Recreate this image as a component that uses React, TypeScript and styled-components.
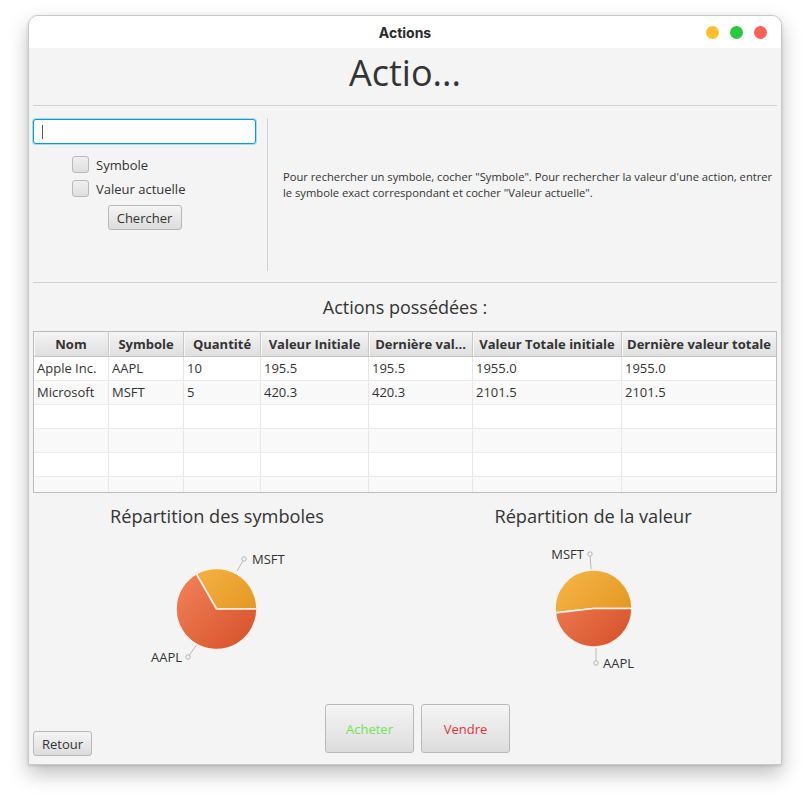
import React from "react";
import styled, { createGlobalStyle } from "styled-components";

const Global = createGlobalStyle`
  html, body { margin: 0; padding: 0; background: #ffffff; }
  body { font-family: "Open Sans", "Noto Sans", sans-serif; color: #333333; }
  * { box-sizing: border-box; }
`;

const Page = styled.div`
  width: 810px;
  height: 805px;
  padding: 15px 0 0 28px;
`;

const Window = styled.div`
  width: 754px;
  height: 750px;
  display: flex;
  flex-direction: column;
  border: 1px solid #c9c9c9;
  border-radius: 10px 10px 0 0;
  background: #f4f4f4;
  box-shadow: 0 9px 20px rgba(0, 0, 0, 0.25), 0 1px 3px rgba(0, 0, 0, 0.14);
  overflow: hidden;
`;

const TitleBar = styled.div`
  flex: none;
  height: 32px;
  background: #ffffff;
  display: grid;
  grid-template-columns: 1fr auto 1fr;
  align-items: center;
  padding: 0 14px;
`;

const WindowTitle = styled.div`
  grid-column: 2;
  font-family: Inter, "Liberation Sans", sans-serif;
  font-weight: 700;
  font-size: 14px;
  color: #2b2b2b;
`;

const Lights = styled.div`
  grid-column: 3;
  justify-self: end;
  display: flex;
  gap: 11px;
`;

const Light = styled.span<{ $c: string }>`
  width: 13px;
  height: 13px;
  border-radius: 50%;
  background: ${(p) => p.$c};
`;

const Content = styled.div`
  flex: 1;
  display: flex;
  flex-direction: column;
  padding: 0 4px 8px 4px;
`;

const Heading = styled.h1`
  margin: 0;
  height: 50px;
  line-height: 50px;
  text-align: center;
  font-weight: 400;
  font-size: 36px;
  color: #333;
`;

const HSep = styled.div<{ $mt?: number }>`
  height: 1px;
  background: #d2d2d2;
  margin-top: ${(p) => p.$mt ?? 0}px;
`;

const SearchSection = styled.div`
  height: 176px;
  display: flex;
`;

const LeftPanel = styled.div`
  width: 223px;
  padding-top: 13px;
  display: flex;
  flex-direction: column;
`;

const TextField = styled.div`
  height: 25px;
  background: #ffffff;
  border: 1px solid #039ed3;
  border-radius: 3px;
  box-shadow: 0 0 0 1px #a9dbef;
  display: flex;
  align-items: center;
  padding-left: 8px;
`;

const Caret = styled.span`
  width: 1px;
  height: 14px;
  background: #555;
`;

const CheckRow = styled.label<{ $mt: number }>`
  display: flex;
  align-items: center;
  gap: 7px;
  height: 17px;
  margin-top: ${(p) => p.$mt}px;
  padding-left: 39px;
  font-size: 13px;
  color: #333;
`;

const Box = styled.span`
  width: 17px;
  height: 17px;
  border: 1px solid #b9b9b9;
  border-radius: 3px;
  background: linear-gradient(#f0f0f0, #dedede);
`;

const Button = styled.button<{ $w: number; $h: number; $color?: string }>`
  width: ${(p) => p.$w}px;
  height: ${(p) => p.$h}px;
  padding: 0;
  border: 1px solid #b8b8b8;
  border-radius: 3px;
  background: linear-gradient(#f5f5f5, #dcdcdc);
  font-family: "Open Sans", "Noto Sans", sans-serif;
  font-size: 13px;
  color: ${(p) => p.$color ?? "#333"};
  flex: none;
`;

const SearchButton = styled(Button)`
  align-self: center;
  margin-top: 8px;
`;

const VSep = styled.div`
  width: 1px;
  height: 153px;
  margin: 12px 0 0 11px;
  background: #d2d2d2;
`;

const Help = styled.p`
  margin: 63px 0 0 15px;
  font-size: 11.2px;
  line-height: 16px;
  white-space: nowrap;
  color: #333;
`;

const SectionTitle = styled.div<{ $mt: number }>`
  margin-top: ${(p) => p.$mt}px;
  height: 24px;
  line-height: 24px;
  font-size: 18px;
  text-align: center;
  color: #333;
`;

const Table = styled.div`
  margin-top: 12px;
  height: 162px;
  border: 1px solid #bcbcbc;
  background: #ffffff;
  overflow: hidden;
`;

const COLS = "75px 75px 77px 108px 104px 149px 1fr";

const HeaderRow = styled.div`
  display: grid;
  grid-template-columns: ${COLS};
  height: 25px;
  border-bottom: 1px solid #c4c4c4;
  background: linear-gradient(#f4f4f4, #dfdfdf);
`;

const HeadCell = styled.div`
  border-right: 1px solid #c9c9c9;
  box-shadow: inset 1px 0 0 #f9f9f9;
  font-weight: 700;
  font-size: 13px;
  line-height: 24px;
  text-align: center;
  white-space: nowrap;
  overflow: hidden;
  &:last-child { border-right: none; }
`;

const Row = styled.div<{ $alt: boolean }>`
  display: grid;
  grid-template-columns: ${COLS};
  height: 24px;
  border-bottom: 1px solid #ececec;
  background: ${(p) => (p.$alt ? "#f9f9f9" : "#ffffff")};
`;

const Cell = styled.div`
  border-right: 1px solid #e6e6e6;
  padding-left: 3px;
  font-size: 13px;
  line-height: 23px;
  white-space: nowrap;
  &:last-child { border-right: none; }
`;

const Charts = styled.div`
  margin-top: 11px;
  display: grid;
  grid-template-columns: 1fr 1fr;
`;

const ChartCol = styled.div`
  display: flex;
  flex-direction: column;
`;

const ChartTitle = styled.div<{ $dx: number }>`
  height: 24px;
  line-height: 24px;
  font-size: 18.2px;
  text-align: center;
  color: #333;
  padding-left: ${(p) => (p.$dx > 0 ? p.$dx * 2 : 0)}px;
  padding-right: ${(p) => (p.$dx < 0 ? -p.$dx * 2 : 0)}px;
`;

const ChartSvg = styled.svg`
  display: block;
  width: 372px;
  height: 160px;
`;

const BottomRow = styled.div`
  margin-top: auto;
  display: flex;
  align-items: flex-end;
`;

const ActionGroup = styled.div`
  display: flex;
  gap: 7px;
  margin: 0 0 3px 233px;
`;

type Slice = { value: number; from: string; to: string };
type Label = { text: string; ex: number; ey: number; px: number; py: number; anchor: "start" | "end"; tx: number };

function PieChart(props: {
  id: string;
  title: string;
  titleShift: number;
  cx: number;
  cy: number;
  r: number;
  slices: Slice[];
  labels: Label[];
}) {
  const { id, title, titleShift, cx, cy, r, slices, labels } = props;
  const total = slices.reduce((s, x) => s + x.value, 0);
  const pt = (a: number) => {
    const rad = (a * Math.PI) / 180;
    return [cx + r * Math.cos(rad), cy - r * Math.sin(rad)];
  };
  let angle = 0;
  const paths = slices.map((s) => {
    const a0 = angle;
    const a1 = angle + (s.value / total) * 360;
    angle = a1;
    const [x0, y0] = pt(a0);
    const [x1, y1] = pt(a1);
    const large = a1 - a0 > 180 ? 1 : 0;
    return `M ${cx} ${cy} L ${x0} ${y0} A ${r} ${r} 0 ${large} 0 ${x1} ${y1} Z`;
  });
  return (
    <ChartCol>
      <ChartTitle $dx={titleShift}>{title}</ChartTitle>
      <ChartSvg viewBox="0 0 372 160">
        <defs>
          {slices.map((s, i) => (
            <linearGradient
              key={i}
              id={`${id}-g${i}`}
              gradientUnits="userSpaceOnUse"
              x1={cx - r}
              y1={cy - r}
              x2={cx + r}
              y2={cy + r}
            >
              <stop offset="0" stopColor={s.from} />
              <stop offset="1" stopColor={s.to} />
            </linearGradient>
          ))}
        </defs>
        {paths.map((d, i) => (
          <path key={i} d={d} fill={`url(#${id}-g${i})`} stroke="#f7f1ea" strokeWidth={1.6} strokeLinejoin="round" />
        ))}
        {labels.map((l, i) => (
          <g key={i}>
            <line x1={l.ex} y1={l.ey} x2={l.px} y2={l.py} stroke="#b9b9b9" strokeWidth={1} />
            <circle cx={l.px} cy={l.py} r={2.2} fill="#f4f4f4" stroke="#b4b4b4" strokeWidth={1} />
            <text
              x={l.tx}
              y={l.py + 4.5}
              textAnchor={l.anchor}
              fontFamily='"Open Sans", "Noto Sans", sans-serif'
              fontSize={13}
              fill="#333"
            >
              {l.text}
            </text>
          </g>
        ))}
      </ChartSvg>
    </ChartCol>
  );
}

const headers = [
  "Nom",
  "Symbole",
  "Quantité",
  "Valeur Initiale",
  "Dernière val...",
  "Valeur Totale initiale",
  "Dernière valeur totale",
];

const rows: string[][] = [
  ["Apple Inc.", "AAPL", "10", "195.5", "195.5", "1955.0", "1955.0"],
  ["Microsoft", "MSFT", "5", "420.3", "420.3", "2101.5", "2101.5"],
  ["", "", "", "", "", "", ""],
  ["", "", "", "", "", "", ""],
  ["", "", "", "", "", "", ""],
  ["", "", "", "", "", "", ""],
];

const MSFT_C = { from: "#f6b74a", to: "#de8d15" };
const AAPL_C = { from: "#f2855c", to: "#d54f27" };

export default function App() {
  return (
    <>
      <Global />
      <Page>
        <Window>
          <TitleBar>
            <WindowTitle>Actions</WindowTitle>
            <Lights>
              <Light $c="#fdbf2d" />
              <Light $c="#28c840" />
              <Light $c="#fe5f57" />
            </Lights>
          </TitleBar>
          <Content>
            <Heading>Actio...</Heading>
            <HSep $mt={7} />
            <SearchSection>
              <LeftPanel>
                <TextField>
                  <Caret />
                </TextField>
                <CheckRow $mt={12}>
                  <Box />
                  Symbole
                </CheckRow>
                <CheckRow $mt={7}>
                  <Box />
                  Valeur actuelle
                </CheckRow>
                <SearchButton $w={74} $h={25}>Chercher</SearchButton>
              </LeftPanel>
              <VSep />
              <Help>
                Pour rechercher un symbole, cocher "Symbole". Pour rechercher la valeur d'une action, entrer
                <br />
                le symbole exact correspondant et cocher "Valeur actuelle".
              </Help>
            </SearchSection>
            <HSep />
            <SectionTitle $mt={12}>Actions possédées :</SectionTitle>
            <Table>
              <HeaderRow>
                {headers.map((h) => (
                  <HeadCell key={h}>{h}</HeadCell>
                ))}
              </HeaderRow>
              {rows.map((r, i) => (
                <Row key={i} $alt={i % 2 === 1}>
                  {r.map((c, j) => (
                    <Cell key={j}>{c}</Cell>
                  ))}
                </Row>
              ))}
            </Table>
            <Charts>
              <PieChart
                id="sym"
                title="Répartition des symboles"
                titleShift={-2}
                cx={183.5}
                cy={81}
                r={40.5}
                slices={[
                  { value: 5, ...MSFT_C },
                  { value: 10, ...AAPL_C },
                ]}
                labels={[
                  { text: "MSFT", ex: 204, ey: 43, px: 211, py: 31, anchor: "start", tx: 219 },
                  { text: "AAPL", ex: 163.5, ey: 117, px: 155, py: 129, anchor: "end", tx: 149 },
                ]}
              />
              <PieChart
                id="val"
                title="Répartition de la valeur"
                titleShift={2}
                cx={188.5}
                cy={80.5}
                r={38.5}
                slices={[
                  { value: 2101.5, ...MSFT_C },
                  { value: 1955.0, ...AAPL_C },
                ]}
                labels={[
                  { text: "MSFT", ex: 186, ey: 41, px: 185, py: 26, anchor: "end", tx: 179 },
                  { text: "AAPL", ex: 191, ey: 120, px: 191, py: 135, anchor: "start", tx: 198 },
                ]}
              />
            </Charts>
            <BottomRow>
              <Button $w={59} $h={25}>Retour</Button>
              <ActionGroup>
                <Button $w={89} $h={49} $color="#74e254">Acheter</Button>
                <Button $w={89} $h={49} $color="#e0353b">Vendre</Button>
              </ActionGroup>
            </BottomRow>
          </Content>
        </Window>
      </Page>
    </>
  );
}
